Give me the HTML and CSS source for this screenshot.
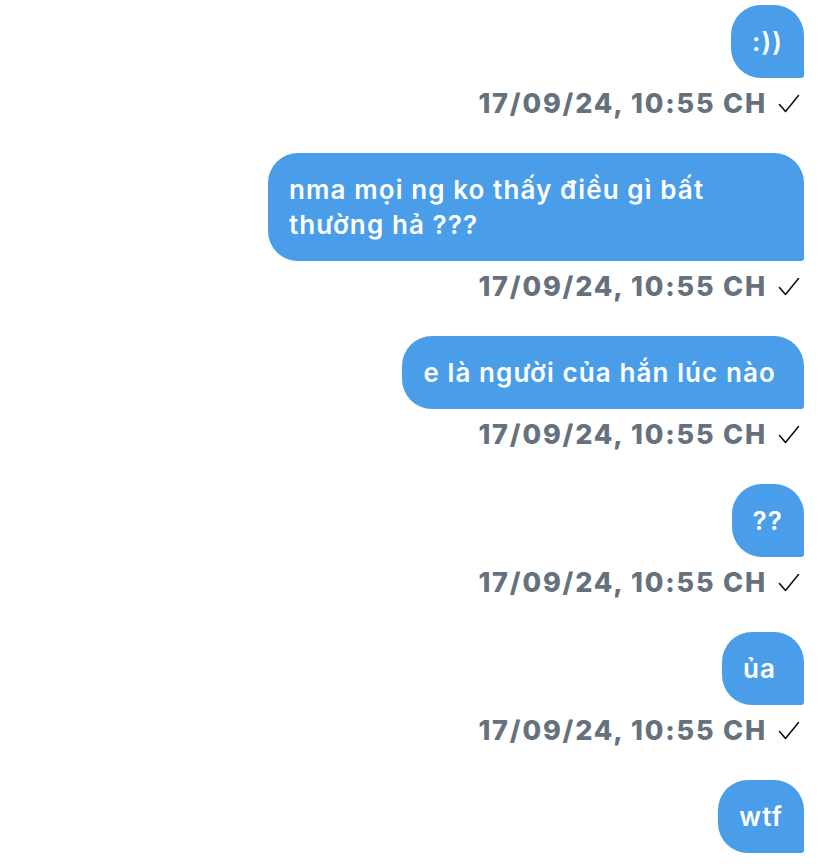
FILE: index.html
```html
<!DOCTYPE html>
<html lang="vi">
<head>
  <meta charset="UTF-8">
  <title>Chat</title>
  <link rel="stylesheet" href="styles.css">
</head>
<body>

<div class="chat">
  <div class="msg">
    <div class="bubble">:))</div>
    <div class="meta"><span>17/09/24, 10:55 CH</span><svg class="tick" viewBox="0 0 22 20"><polyline points="1.5,10.5 7.5,17.5 20.5,1.5"/></svg></div>
  </div>

  <div class="msg">
    <div class="bubble">nma mọi ng ko thấy điều gì bất thường hả ???</div>
    <div class="meta"><span>17/09/24, 10:55 CH</span><svg class="tick" viewBox="0 0 22 20"><polyline points="1.5,10.5 7.5,17.5 20.5,1.5"/></svg></div>
  </div>

  <div class="msg">
    <div class="bubble trail">e là người của hắn lúc nào</div>
    <div class="meta"><span>17/09/24, 10:55 CH</span><svg class="tick" viewBox="0 0 22 20"><polyline points="1.5,10.5 7.5,17.5 20.5,1.5"/></svg></div>
  </div>

  <div class="msg">
    <div class="bubble">??</div>
    <div class="meta"><span>17/09/24, 10:55 CH</span><svg class="tick" viewBox="0 0 22 20"><polyline points="1.5,10.5 7.5,17.5 20.5,1.5"/></svg></div>
  </div>

  <div class="msg">
    <div class="bubble trail">ủa</div>
    <div class="meta"><span>17/09/24, 10:55 CH</span><svg class="tick" viewBox="0 0 22 20"><polyline points="1.5,10.5 7.5,17.5 20.5,1.5"/></svg></div>
  </div>

  <div class="msg">
    <div class="bubble">wtf</div>
  </div>
</div>

</body>
</html>
```

FILE: styles.css
```css
body {
  margin: 0;
  background: #fff;
  font-family: Inter, "Noto Sans", sans-serif;
}
.chat {
  display: flex;
  flex-direction: column;
  align-items: flex-end;
  padding: 5px 24px 0 0;
}
.msg {
  display: flex;
  flex-direction: column;
  align-items: flex-end;
  margin-bottom: 31px;
}
.bubble {
  background: #4a9ee9;
  color: #fff;
  font-size: 26px;
  font-weight: 600;
  letter-spacing: 1.1px;
  line-height: 35px;
  padding: 19px 21px;
  border-radius: 30px 30px 3px 30px;
  max-width: 494px;
}
.bubble.trail {
  padding-right: 28px;
}
.meta {
  display: flex;
  align-items: center;
  margin-top: 8px;
  padding-right: 4px;
  color: #66717e;
  font-size: 27px;
  font-weight: 800;
  letter-spacing: 1.8px;
  line-height: 36px;
}
.tick {
  width: 22px;
  height: 20px;
  margin-left: 11px;
  fill: none;
  stroke: #111;
  stroke-width: 1.6;
  stroke-linecap: round;
  stroke-linejoin: round;
}
```
